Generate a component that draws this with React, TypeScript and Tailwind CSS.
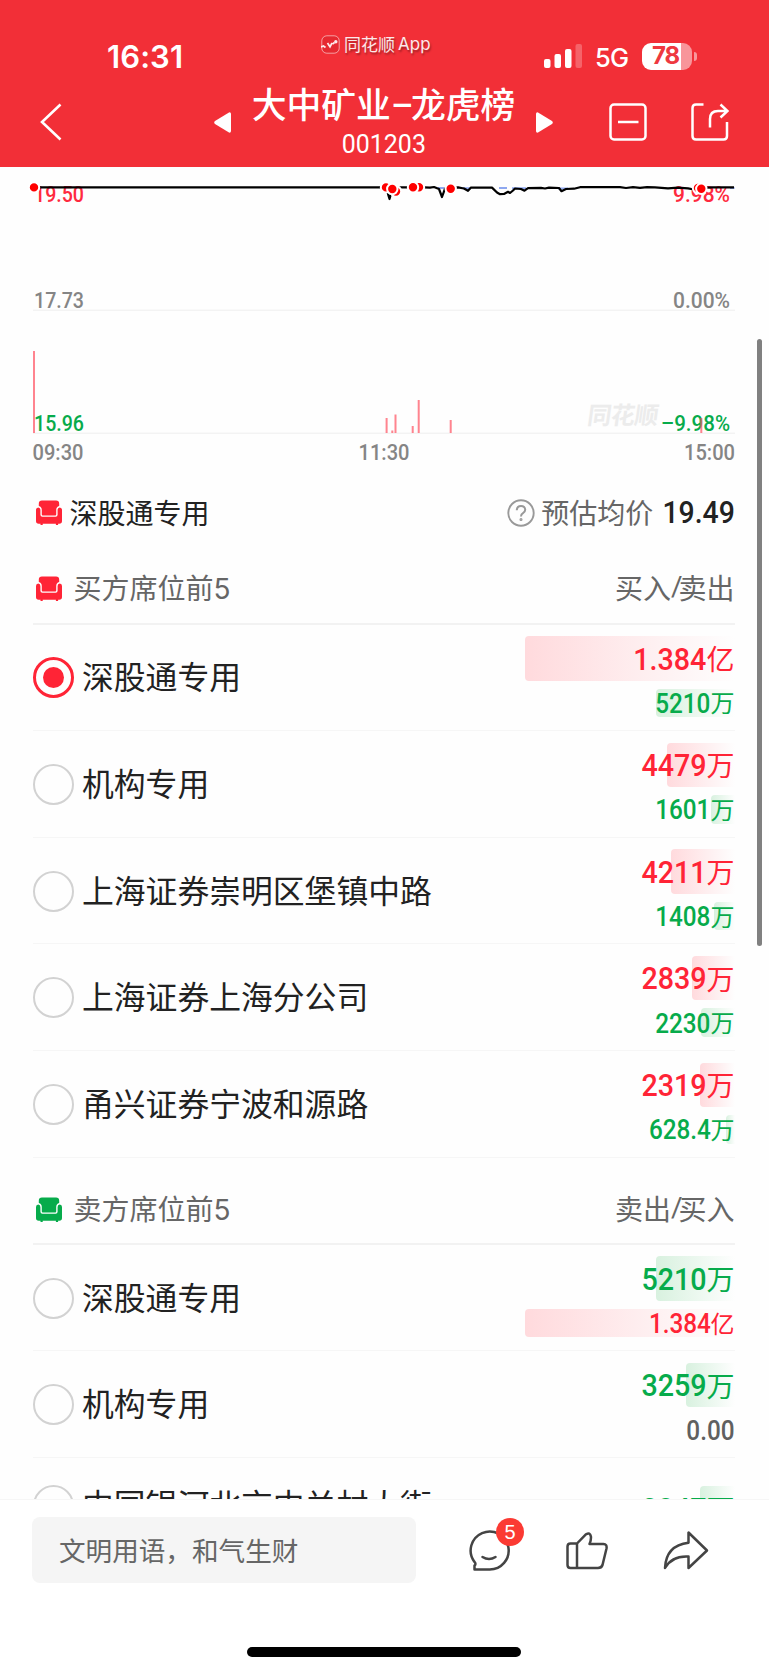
import React, { useState } from 'react';

const BUY_SEATS = [
  { id: 'b1', name: '深股通专用', main: '1.384', mainUnit: '亿', mainBar: 210, sub: '5210', subUnit: '万', subBar: 79 },
  { id: 'b2', name: '机构专用', main: '4479', mainUnit: '万', mainBar: 68, sub: '1601', subUnit: '万', subBar: 24 },
  { id: 'b3', name: '上海证券崇明区堡镇中路', main: '4211', mainUnit: '万', mainBar: 64, sub: '1408', subUnit: '万', subBar: 21 },
  { id: 'b4', name: '上海证券上海分公司', main: '2839', mainUnit: '万', mainBar: 43, sub: '2230', subUnit: '万', subBar: 34 },
  { id: 'b5', name: '甬兴证券宁波和源路', main: '2319', mainUnit: '万', mainBar: 35, sub: '628.4', subUnit: '万', subBar: 9 },
];

const SELL_SEATS = [
  { id: 's1', name: '深股通专用', main: '5210', mainUnit: '万', mainBar: 79, sub: '1.384', subUnit: '亿', subBar: 210 },
  { id: 's2', name: '机构专用', main: '3259', mainUnit: '万', mainBar: 49, sub: '0.00', subUnit: '', subBar: 0 },
  { id: 's3', name: '中国银河北京中关村大街', main: '2347', mainUnit: '万', mainBar: 35, sub: '0.00', subUnit: '', subBar: 0, tall: true },
];

// x position and top of each volume bar
const VOLUMES = [[34, 351], [386.6, 418], [392.3, 430.5], [395.5, 414.5], [412.7, 426], [418.7, 400], [450.7, 420], [701.3, 418]];

// trade markers, later ones are drawn on top
const MARKERS = [[34, 187.4], [386, 187.4], [396, 191.5], [392.3, 189], [419, 187.3], [413, 187.3], [450.7, 188.8], [698, 188], [701.3, 188.8]];

const Sofa = ({ className }) => (
  <svg viewBox="0 0 26 26" className={className} fill="currentColor">
    <path d="M6 .5h14q3.200 0 3.200 3.200v2.400Q20.200 7 20.200 10v4.500q0 1-1 1H6.800q-1 0-1-1V10q0-3-3-3.900V3.700Q2.800.500 6 .5z" />
    <path d="M2.200 7.500q2.200 0 2.200 2.600v4.700q0 2 2 2h13.200q2 0 2-2v-4.700q0-2.600 2.200-2.600t2.200 2.600v11q0 2.700-2.700 2.700h-1.200v1.300h-2.200v-1.300H6.700v1.300H4.500v-1.300H2.700Q0 23.800 0 21.100v-11q0-2.600 2.200-2.600z" />
  </svg>
);

function Header() {
  return (
    <header className="relative h-[167px] shrink-0 bg-[#f22f37] text-white">
      <div className="flex h-[83px] items-start pl-[107px] pr-[72px] pt-[38px]">
        <span className="font-['Inter'] text-[31px] leading-[38px] font-semibold tracking-[0.1px]">16:31</span>
        <div className="ml-auto flex h-[36px] items-center">
          <svg viewBox="0 0 38 24" className="h-6 w-[38px]" fill="white">
            <rect x="0" y="15" width="6.500" height="9" rx="2" />
            <rect x="10.500" y="10" width="6.500" height="14" rx="2" />
            <rect x="21" y="5" width="6.500" height="19" rx="2" />
            <rect x="31.500" y="0" width="6.500" height="24" rx="2" opacity="0.25" />
          </svg>
          <span className="ml-[13px] w-[34px] pt-[3px] font-['Inter'] text-[25.500px] leading-none font-medium tracking-[-0.8px]">5G</span>
          <div className="ml-[13px] flex h-[27px] w-[50px] items-center overflow-hidden rounded-[9px] bg-[linear-gradient(to_right,white_39px,#f8959a_39px)] pl-[10px]">
            <span className="font-['Inter'] text-[24px] leading-none font-bold tracking-[-1.2px] text-[#ee3840]">78</span>
          </div>
          <div className="ml-[2px] h-[9px] w-[3px] rounded-r-full bg-white/50"></div>
        </div>
      </div>

      {/* App mark above the title */}
      <div className="absolute top-[33px] left-[321px] flex items-center text-white/90">
        <svg viewBox="0 0 19 19" className="h-[19px] w-[19px]" fill="none" stroke="currentColor">
          <rect x="0.800" y="0.800" width="17.400" height="17.400" rx="5" fill="#d9232c" fillOpacity="0.5" strokeOpacity="0.6" />
          <path d="M0 12l2.500-1 2 1.500M6.500 8l2.500 3.800 2-3.800M11.500 9l2-1.500" strokeWidth="1.700" />
          <circle cx="14.800" cy="6.800" r="1.700" fill="currentColor" stroke="none" />
        </svg>
        <span className="ml-[4px] text-[17px] leading-[22px] [text-shadow:1px_2px_2px_rgba(0,0,0,0.35)]">同花顺</span>
        <span className="ml-[3px] font-['Inter'] text-[17px] leading-[22px] [text-shadow:1px_2px_2px_rgba(0,0,0,0.35)]">App</span>
      </div>

      <div className="flex h-[78px] items-center pl-[40px] pr-[40px]">
        <svg viewBox="0 0 22 38" className="h-[38px] w-[22px]" fill="none" stroke="white" strokeWidth="2.600">
          <path d="M20.500 1.500L2 19l18.500 17.500" />
        </svg>
        <svg viewBox="0 0 17 21" className="ml-[152px] h-[21px] w-[17px]" fill="white">
          <path d="M15 .4Q17 0 17 2v17q0 2-2 1.600L1 11.900Q-.6 10.500 1 9.100z" />
        </svg>
        <div className="-mt-px ml-[19px] w-[267px] text-center">
          <h1 className="text-[34.800px] leading-[42px] font-medium whitespace-nowrap">大中矿业<span className="inline-block w-[20px] text-center font-['Roboto']">–</span>龙虎榜</h1>
          <p className="font-['Roboto'] text-[26px] leading-[34px]"><span className="inline-block scale-x-[0.96]">001203</span></p>
        </div>
        <svg viewBox="0 0 17 21" className="ml-[19px] h-[21px] w-[17px]" fill="white">
          <path d="M2 .4Q0 0 0 2v17q0 2 2 1.600l14-8.700q1.600-1.400 0-2.800z" />
        </svg>
        <svg viewBox="0 0 38 38" className="ml-auto h-[38px] w-[38px]" fill="none" stroke="white" strokeWidth="2.500">
          <rect x="1.500" y="1.500" width="35" height="35" rx="3.500" />
          <path d="M9 19h20.500" />
        </svg>
        <svg viewBox="0 0 38 38" className="ml-[44px] h-[38px] w-[38px]" fill="none" stroke="white" strokeWidth="2.500">
          <path d="M12.500 1.500H5Q1.500 1.500 1.500 5v28q0 3.500 3.500 3.500h27.500q3.500 0 3.500-3.500V19" />
          <path d="M19 24.500V16q0-8 8-8h9M29.500 1.500L36.500 8l-7 6.500" />
        </svg>
      </div>
    </header>
  );
}

function Chart() {
  return (
    <svg viewBox="0 167 769 303" className="h-[303px] w-full shrink-0 font-['Roboto'] text-[22px] font-medium">
      <path d="M33 310.300H735M33 433.300H735" stroke="#f3f3f3" strokeWidth="1.500" />
      <text x="587" y="424" fill="#ececec" transform="skewX(-8)" className="translate-x-[59px] font-['Noto_Sans_CJK_SC'] text-[24px] font-bold" textLength="71">同花顺</text>

      <text x="34" y="202" fill="#ff2a3f" textLength="50" lengthAdjust="spacingAndGlyphs">19.50</text>
      <text x="673" y="202" fill="#ff2a3f" textLength="57" lengthAdjust="spacingAndGlyphs">9.98%</text>
      <text x="34" y="308" fill="#858585" textLength="50" lengthAdjust="spacingAndGlyphs">17.73</text>
      <text x="673" y="308" fill="#858585" textLength="57" lengthAdjust="spacingAndGlyphs">0.00%</text>
      <text x="34" y="430.500" fill="#07ab4b" textLength="50" lengthAdjust="spacingAndGlyphs">15.96</text>
      <text x="661" y="430.500" fill="#07ab4b" textLength="69" lengthAdjust="spacingAndGlyphs">–9.98%</text>
      <text x="32.500" y="459.500" fill="#858585" textLength="51" lengthAdjust="spacingAndGlyphs">09:30</text>
      <text x="358.500" y="459.500" fill="#858585" textLength="51" lengthAdjust="spacingAndGlyphs">11:30</text>
      <text x="684" y="459.500" fill="#858585" textLength="51" lengthAdjust="spacingAndGlyphs">15:00</text>

      {VOLUMES.map(([x, top]) => (
        <path key={x} d={`M${x} ${top}V433`} stroke="#ff5060" strokeOpacity="0.7" strokeWidth="2" />
      ))}

      <path d="M438 187.900h8M463 188.300h8M499 187.900h8M512 188.200h14M558 188.400h10M730 188h4.500" stroke="#8fa8f0" strokeWidth="2" />
      <path
        d="M34 187.300H386L389.500 199 392 190 401 187.300H424L430 187.700 434 187 439 189 442 197 445 188.600 458 187.400 464 188.500 468 190.800 471 187.500 492 187.600 497 192.500 500 194.200 504 194 508 191.800 510 193 513 190.500 515 188.500 521 189 524.500 190.700 528 188.200 541 187.900 545 188.500 549 187.600 559 188 561.500 191.200 566 189 574 188.700 580 187.200H620L626 188 633 187.200 640 187.800 647 187.100 655 187.400 668 188.300 678 187.600 688 188.400 694 189.500 701 188 712 187.300H734"
        fill="none" stroke="black" strokeWidth="2.200" strokeLinejoin="round"
      />
      {MARKERS.map(([x, y]) => (
        <circle key={x} cx={x} cy={y} r="5.200" fill="#ff0000" stroke="white" strokeWidth="2" />
      ))}
    </svg>
  );
}

function Amount({ value, unit, bar, tone, large }) {
  const color = value === '0.00' ? 'text-[#606060]' : tone === 'red' ? 'text-[#ff2436]' : 'text-[#07ab4b]';
  const fade = tone === 'red' ? 'bg-linear-to-r from-[#ffdadd] to-[#ffdadd]/0' : 'bg-linear-to-r from-[#d8f1df] to-[#d8f1df]/0';
  return (
    <div className={large ? 'relative flex h-[44.500px] w-[220px] items-center justify-end' : 'relative flex h-[28.500px] w-[220px] items-center justify-end'}>
      <div className={`absolute inset-y-0 right-0 rounded-l-[4px] ${fade}`} style={{ width: bar }}></div>
      <div className={`relative flex items-center ${color}`}>
        <span className={large
          ? "mt-[2px] inline-block origin-right scale-x-[0.91] font-['Roboto'] text-[31.500px] leading-none font-medium"
          : "mt-[3px] inline-block origin-right scale-x-[0.9] font-['Roboto'] text-[27px] leading-none font-medium"}>{value}</span>
        {unit && <span className={large ? '-mt-[1px] text-[28px] leading-none' : '-mt-[1px] text-[24px] leading-none'}>{unit}</span>}
      </div>
    </div>
  );
}

function SeatRow({ seat, checked, onSelect, tone }) {
  return (
    <div
      onClick={() => onSelect(seat.id)}
      className={seat.tall
        ? 'flex h-[141px] shrink-0 border-b-[1.500px] border-[#f6f6f6] pt-[16px]'
        : 'flex h-[106.660px] shrink-0 border-b-[1.500px] border-[#f6f6f6]'}
    >
      <div className={seat.tall ? 'flex h-[62px] flex-1 items-center' : 'flex flex-1 items-center pt-[1px]'}>
        {checked ? (
          <span className="flex h-[41px] w-[41px] items-center justify-center rounded-full border-3 border-[#ff2436]">
            <span className="h-[21px] w-[21px] rounded-full bg-[#ff2436]"></span>
          </span>
        ) : (
          <span className="h-[41px] w-[41px] rounded-full border-2 border-[#d2d2d2]"></span>
        )}
        <span className="-mt-[3px] ml-[8.500px] text-[31.800px] leading-none text-[#222]">{seat.name}</span>
      </div>
      <div className={seat.tall ? 'flex flex-col gap-2 pt-[12px]' : 'flex flex-col gap-2 pt-[11.500px]'}>
        <Amount value={seat.main} unit={seat.mainUnit} bar={seat.mainBar} tone={tone} large />
        <Amount value={seat.sub} unit={seat.subUnit} bar={seat.subBar} tone={tone === 'red' ? 'green' : 'red'} large={false} />
      </div>
    </div>
  );
}

function SectionTitle({ title, columns, iconColor }) {
  return (
    <div className="flex h-[68.500px] shrink-0 items-center border-b-2 border-[#f2f2f2] pl-[3.500px] text-[28px] leading-none text-[#666]">
      <Sofa className={`h-[26px] w-[26px] ${iconColor}`} />
      <span className="-mt-[2px] ml-[11.500px]">{title}<span className="font-['Inter'] text-[28px] tracking-tight">5</span></span>
      <span className="-mt-[4px] ml-auto flex">
        {columns[0]}
        <span className="w-[7.500px] text-center font-['Roboto']">/</span>
        {columns[1]}
      </span>
    </div>
  );
}

function BottomBar() {
  return (
    <footer className="flex h-[171px] shrink-0 flex-col items-center border-t border-[#f6f6f6] bg-white">
      <div className="flex w-full items-center pt-[17px] pl-[32px]">
        <div className="flex h-[66px] w-[384px] items-center rounded-[8px] bg-[#f5f5f5] pb-[1px] pl-[27px] text-[26.600px] text-[#666]">文明用语，和气生财</div>
        <div className="relative ml-[52px]">
          <svg viewBox="0 0 42 42" className="h-[42px] w-[42px]" fill="none" stroke="#444" strokeWidth="2.500" strokeLinecap="round" strokeLinejoin="round">
            <path d="M6.500 40.500H21A19 19 0 1 0 6.300 32.700Q8.500 35 6.500 36.500z" />
            <path d="M14.500 28q6.500 4 13 0" />
          </svg>
          <span className="absolute -top-[11px] left-[28px] flex h-[28px] w-[28px] items-center justify-center rounded-full bg-[#fb3a33] font-['Liberation_Sans'] text-[20px] text-white">5</span>
        </div>
        <svg viewBox="0 0 42 39" className="ml-[56px] h-[39px] w-[42px]" fill="none" stroke="#444" strokeWidth="2.500" strokeLinejoin="round">
          <path d="M11 12.500H4.500q-3 0-3 3V34q0 3 3 3H32q3.500 0 4.500-3l4-16.500q.7-4.500-3-4.500H23.500q1.800-4 1.400-7.500-.8-4.700-4.800-2.300z" />
          <path d="M11 12.500V37" />
        </svg>
        <svg viewBox="0 0 46 40" className="ml-[55px] h-[40px] w-[46px]" fill="none" stroke="#444" strokeWidth="2.500" strokeLinejoin="round">
          <path d="M25.500 2.500v10.300Q3 15.500 2 38q7-12.500 23.500-11.500V38L44 20.500z" />
        </svg>
      </div>
      <div className="mt-[64px] mr-px h-[10px] w-[274px] rounded-full bg-black"></div>
    </footer>
  );
}

function App() {
  const [selected, setSelected] = useState('b1');

  return (
    <div className="relative flex h-[1670px] w-[769px] flex-col overflow-hidden bg-[#fefefe] font-['Noto_Sans_CJK_SC',sans-serif]">
      <Header />
      <main className="flex h-[1332px] flex-col overflow-hidden">
        <Chart />

        <div className="flex h-[86px] shrink-0 items-center px-[36px] pr-[34px] text-[28px] leading-none">
          <Sofa className="h-[26px] w-[26px] text-[#ff2436]" />
          <span className="-mt-[3px] ml-[7.500px] text-[#222]">深股通专用</span>
          <svg viewBox="0 0 28 28" className="ml-auto h-7 w-7" fill="none" stroke="#999" strokeWidth="1.900">
            <circle cx="14" cy="14" r="12.700" />
            <path d="M9.800 11.200q.2-4.200 4.200-4.200t4.200 3.800q0 2-2.200 3.300-2 1.200-2 3.400" strokeWidth="2" />
            <circle cx="14" cy="20.500" r="0.600" />
          </svg>
          <span className="-mt-[3px] ml-[6px] text-[#666]">预估均价</span>
          <span className="mt-[1px] ml-[4px] inline-block origin-right scale-x-[0.93] font-['Roboto'] text-[30.500px] font-medium text-[#222]">19.49</span>
        </div>

        <section className="flex shrink-0 flex-col pl-[32.500px] pr-[34.500px]">
          <SectionTitle title="买方席位前" columns={['买入', '卖出']} iconColor="text-[#ff2436]" />
          {BUY_SEATS.map(seat => (
            <SeatRow key={seat.id} seat={seat} checked={selected === seat.id} onSelect={setSelected} tone="red" />
          ))}
        </section>

        <section className="mt-[18.500px] flex shrink-0 flex-col pl-[32.500px] pr-[34.500px]">
          <SectionTitle title="卖方席位前" columns={['卖出', '买入']} iconColor="text-[#07ab4b]" />
          {SELL_SEATS.map(seat => (
            <SeatRow key={seat.id} seat={seat} checked={selected === seat.id} onSelect={setSelected} tone="green" />
          ))}
        </section>
      </main>
      <BottomBar />

      {/* Scroll thumb */}
      <div className="absolute top-[339px] right-[7px] h-[607px] w-[5px] rounded-full bg-[#808080]"></div>
    </div>
  );
}

export default App;
